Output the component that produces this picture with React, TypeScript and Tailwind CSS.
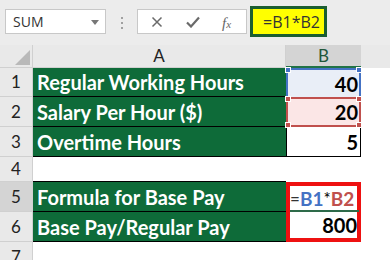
import React from 'react';

const cal = { fontFamily: 'Lato, "Open Sans", sans-serif' };
const ui = { fontFamily: '"Open Sans", "Noto Sans", sans-serif' };

const Handle: React.FC<{ pos: string; color: string }> = ({ pos, color }) => (
  <span className={`absolute w-[6px] h-[6px] ${pos}`} style={{ background: color, border: '1px solid white' }} />
);

const RowNum: React.FC<{ n: number; h: string; active?: boolean }> = ({ n, h, active }) => (
  <div
    className={`${h} flex items-center justify-center border-b border-r border-[#d0d0d0] text-[17px] text-[#222] ${
      active ? 'bg-[#d4d4d4]' : 'bg-[#e9e9e9]'
    }`}
    style={cal}
  >
    {n}
  </div>
);

const App: React.FC = () => {
  return (
    <div className="w-[390px] h-[260px] overflow-hidden bg-[#e9e9e9] select-none">
      {/* formula bar */}
      <div className="h-[45px] relative bg-[#ececec]">
        <div className="absolute left-[5px] top-[9px] w-[101px] h-[25px] bg-white border border-[#c8c8c8] flex items-center pl-[7px] text-[14px] text-[#333]" style={ui}>
          SUM
          <span className="absolute right-[6px] top-[10px] w-0 h-0 border-l-[4px] border-r-[4px] border-t-[5px] border-l-transparent border-r-transparent border-t-[#777]" />
        </div>
        <div className="absolute left-[121px] top-[17px] flex flex-col gap-[3px]">
          <span className="w-[2px] h-[2px] bg-[#a0a0a0]" />
          <span className="w-[2px] h-[2px] bg-[#a0a0a0]" />
          <span className="w-[2px] h-[2px] bg-[#a0a0a0]" />
        </div>
        <div className="absolute left-[137px] top-[9px] w-[110px] h-[25px] bg-white border border-[#c8c8c8] flex items-center">
          <svg className="absolute left-[13px] top-[6px]" width="12" height="12" viewBox="0 0 12 12">
            <path d="M1.5 1.5 L10.5 10.5 M10.5 1.5 L1.5 10.5" stroke="#6a6a6a" strokeWidth="1.5" fill="none" />
          </svg>
          <svg className="absolute left-[48px] top-[6px]" width="14" height="12" viewBox="0 0 14 12">
            <path d="M1 6.5 L5 10.5 L13 1.5" stroke="#6a6a6a" strokeWidth="2.2" fill="none" />
          </svg>
          <span className="absolute left-[84px] top-[2px] text-[15px] italic text-[#666]" style={{ fontFamily: '"Liberation Serif", serif' }}>
            f<span className="text-[11px]">x</span>
          </span>
        </div>
        <div className="absolute left-[250px] top-[6px] w-[77px] h-[31px] bg-[#ffff00] border-[3px] border-[#1b5e31] flex items-center pl-[10px] text-[16px] text-[#333]" style={ui}>
          =B1*B2
        </div>
      </div>

      {/* grid */}
      <div className="grid grid-cols-[33px_253px_75px_29px]">
        {/* header row */}
        <div className="h-[23px] bg-[#e9e9e9] border-r border-b border-[#d0d0d0] relative">
          <span className="absolute left-[15px] top-[5px] w-0 h-0 border-b-[15px] border-l-[15px] border-l-transparent border-b-[#b9b9b9]" />
        </div>
        <div className="h-[23px] bg-[#e9e9e9] border-r border-b border-[#d0d0d0] flex items-center justify-center text-[17px] text-[#222]" style={cal}>
          A
        </div>
        <div className="h-[23px] bg-[#d4d4d4] border-b-2 border-[#217346] flex items-center justify-center text-[17px] text-[#21573a]" style={cal}>
          B
        </div>
        <div className="h-[23px] bg-[#e9e9e9]" />

        {/* row 1 */}
        <RowNum n={1} h="h-[29px]" />
        <div className="h-[29px] bg-[#0e6b39] border-b border-black flex items-center pl-[4px] text-[20px] font-bold text-white" style={cal}>
          Regular Working Hours
        </div>
        <div className="h-[29px] relative bg-[#e9eef7] border-x-2 border-t-2 border-[#4472c4] flex items-center justify-end pr-[1px] text-[20px] font-bold text-black" style={cal}>
          40
          <Handle pos="-left-[3px] -top-[3px]" color="#4472c4" />
          <Handle pos="-right-[3px] -top-[3px]" color="#4472c4" />
        </div>
        <div className="h-[29px] bg-white" />

        {/* row 2 */}
        <RowNum n={2} h="h-[30px]" />
        <div className="h-[30px] bg-[#0e6b39] border-b border-black flex items-center pl-[4px] text-[20px] font-bold text-white" style={cal}>
          Salary Per Hour ($)
        </div>
        <div className="h-[30px] relative bg-[#fbe6e6] border-2 border-[#c0504d] flex items-center justify-end pr-[1px] text-[20px] font-bold text-black" style={cal}>
          20
          <Handle pos="-left-[3px] -top-[3px]" color="#c0504d" />
          <Handle pos="-right-[3px] -top-[3px]" color="#c0504d" />
          <Handle pos="-left-[3px] -bottom-[3px]" color="#c0504d" />
          <Handle pos="-right-[3px] -bottom-[3px]" color="#c0504d" />
        </div>
        <div className="h-[30px] bg-white" />

        {/* row 3 */}
        <RowNum n={3} h="h-[30px]" />
        <div className="h-[30px] bg-[#0e6b39] border-b border-black flex items-center pl-[4px] text-[20px] font-bold text-white" style={cal}>
          Overtime Hours
        </div>
        <div className="h-[30px] bg-white border-x border-b border-black flex items-center justify-end pr-[2px] text-[20px] font-bold text-black" style={cal}>
          5
        </div>
        <div className="h-[30px] bg-white" />

        {/* row 4 */}
        <RowNum n={4} h="h-[25px]" />
        <div className="h-[25px] bg-white border-b border-black" />
        <div className="h-[25px] bg-white" />
        <div className="h-[25px] bg-white" />

        {/* row 5 */}
        <RowNum n={5} h="h-[30px]" active />
        <div className="h-[30px] bg-[#0e6b39] border-b border-black flex items-center pl-[4px] text-[20px] font-bold text-white" style={cal}>
          Formula for Base Pay
        </div>
        <div className="h-[30px] relative bg-white border-x-4 border-t-4 border-[#ee1111] flex items-center pl-0 text-[19px] text-black" style={cal}>
          <span className="text-[17px] text-[#333]">=</span>
          <span className="font-bold text-[#4472c4]">B1</span>
          <span className="text-[17px]">*</span>
          <span className="font-bold text-[#c0504d]">B2</span>
          <span className="absolute left-0 right-[-2px] bottom-0 h-[2px] bg-[#2e6b4a]" />
        </div>
        <div className="h-[30px] bg-white" />

        {/* row 6 */}
        <RowNum n={6} h="h-[30px]" />
        <div className="h-[30px] bg-[#0e6b39] border-b border-black flex items-center pl-[4px] text-[20px] font-bold text-white" style={cal}>
          Base Pay/Regular Pay
        </div>
        <div className="h-[30px] bg-white border-x-4 border-b-4 border-[#ee1111] flex items-center justify-end pr-0 text-[20px] font-bold text-black" style={cal}>
          800
        </div>
        <div className="h-[30px] bg-white" />

        {/* row 7 */}
        <RowNum n={7} h="h-[30px]" />
        <div className="h-[30px] bg-white" />
        <div className="h-[30px] bg-white" />
        <div className="h-[30px] bg-white" />
      </div>
    </div>
  );
};

export default App;
